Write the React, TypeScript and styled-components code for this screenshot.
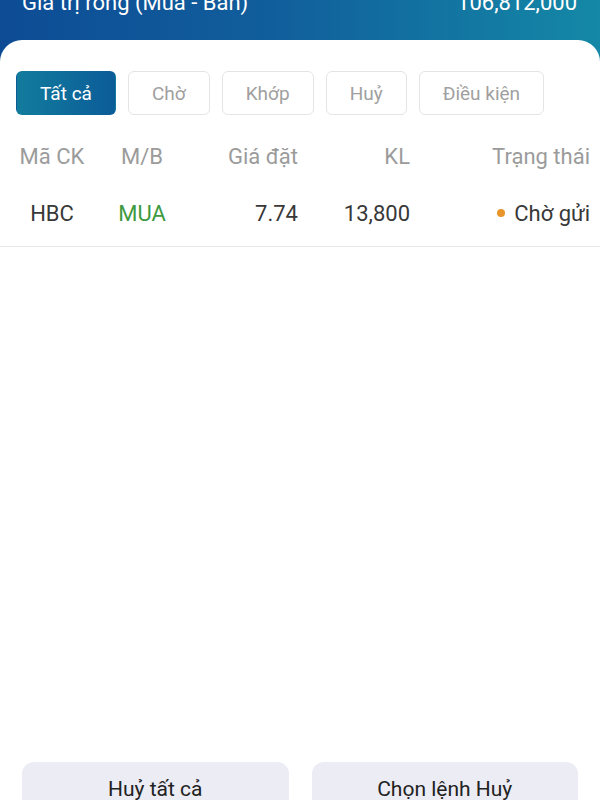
import styled, { createGlobalStyle } from "styled-components";

const GlobalStyle = createGlobalStyle`
  html, body {
    margin: 0;
    padding: 0;
  }
  body {
    font-family: Roboto, "Noto Sans", "Liberation Sans", sans-serif;
    background: #ffffff;
  }
`

const tabs = ['Tất cả', 'Chờ', 'Khớp', 'Huỷ', 'Điều kiện']

const orders = [
    { code: 'HBC', side: 'MUA', price: '7.74', volume: '13,800', status: 'Chờ gửi' },
]

const App = () => {
    return(
        <Page>
            <GlobalStyle/>
            <Header>
                <HeaderText>Giá trị ròng (Mua - Bán)</HeaderText>
                <HeaderText>106,812,000</HeaderText>
            </Header>
            <Card>
                <Tabs>
                    {tabs.map((t, i) => (
                        <Tab key={t} $active={i === 0}>{t}</Tab>
                    ))}
                </Tabs>
                <HeadRow>
                    <Cell $align="center">Mã CK</Cell>
                    <Cell $align="center">M/B</Cell>
                    <Cell $align="right">Giá đặt</Cell>
                    <Cell $align="right">KL</Cell>
                    <Cell $align="right">Trạng thái</Cell>
                </HeadRow>
                {orders.map(o => (
                    <DataRow key={o.code}>
                        <Cell $align="center">{o.code}</Cell>
                        <Cell $align="center" $color="#3d9a40">{o.side}</Cell>
                        <Cell $align="right">{o.price}</Cell>
                        <Cell $align="right">{o.volume}</Cell>
                        <Cell $align="right"><Dot/>{o.status}</Cell>
                    </DataRow>
                ))}
                <Spacer/>
                <Footer>
                    <ActionButton>Huỷ tất cả</ActionButton>
                    <ActionButton>Chọn lệnh Huỷ</ActionButton>
                </Footer>
            </Card>
        </Page>
    )
}

export default App;

const Page = styled.div`
    display: flex;
    flex-direction: column;
    width: 600px;
    height: 800px;
    overflow: hidden;
    background:
        linear-gradient(90deg, #0d4c95 0%, #115e9c 45%, #1488a6 100%) top / 100% 70px no-repeat,
        #ffffff;
`

const Header = styled.div`
    display: flex;
    justify-content: space-between;
    align-items: flex-start;
    height: 40px;
    padding: 0 23px 0 22px;
`

const HeaderText = styled.div`
    margin-top: -9px;
    font-size: 22px;
    line-height: 24px;
    color: #ffffff;
`

const Card = styled.div`
    flex: 1;
    display: flex;
    flex-direction: column;
    background: #ffffff;
    border-radius: 22px 22px 0 0;
    padding-top: 31px;
`

const Tabs = styled.div`
    display: flex;
    gap: 12px;
    padding: 0 16px;
`

const Tab = styled.div<{ $active?: boolean }>`
    height: 44px;
    box-sizing: border-box;
    padding: 0 23px;
    display: flex;
    align-items: center;
    justify-content: center;
    font-size: 19px;
    border-radius: 6px;
    color: ${p => p.$active ? '#ffffff' : '#a0a0a0'};
    background: ${p => p.$active ? 'linear-gradient(90deg, #127c9d 0%, #0b5c98 100%)' : '#ffffff'};
    border: 1px solid ${p => p.$active ? 'transparent' : '#e4e4e4'};

    &:first-child {
        width: 100px;
    }
`

const HeadRow = styled.div`
    display: grid;
    grid-template-columns: 104px 76px 118px 112px 1fr;
    align-items: center;
    height: 48px;
    margin-top: 17px;
    padding-right: 10px;
    font-size: 22px;
    color: #9b9b9b;
`

const DataRow = styled(HeadRow)`
    height: 66px;
    margin-top: 0;
    color: #383838;
    border-bottom: 1px solid #e6e6e6;
`

const Cell = styled.div<{ $align: 'center' | 'right', $color?: string }>`
    text-align: ${p => p.$align};
    color: ${p => p.$color || 'inherit'};
    white-space: nowrap;
`

const Dot = styled.span`
    display: inline-block;
    width: 8px;
    height: 8px;
    border-radius: 50%;
    background: #e8952c;
    margin-right: 9px;
    vertical-align: middle;
    position: relative;
    top: -2px;
`

const Spacer = styled.div`
    flex: 1;
`

const Footer = styled.div`
    display: flex;
    gap: 23px;
    padding: 0 22px;
    margin-bottom: -16px;
`

const ActionButton = styled.div`
    flex: 1;
    height: 54px;
    display: flex;
    align-items: center;
    justify-content: center;
    border-radius: 12px;
    background: #ebecf4;
    font-size: 21px;
    color: #222222;
`
